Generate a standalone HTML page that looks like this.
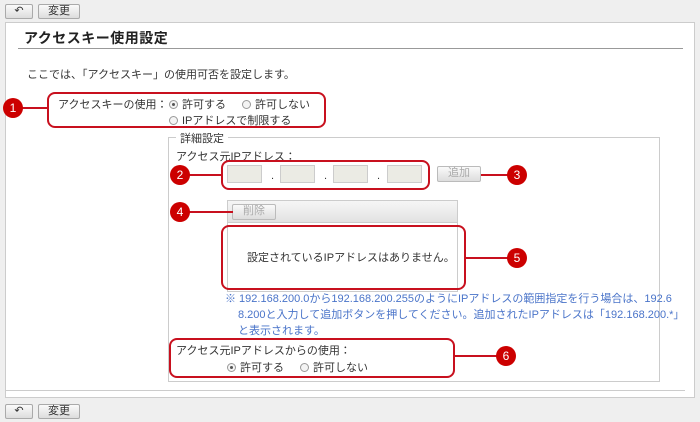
<!DOCTYPE html>
<html><head><meta charset="utf-8"><style>
*{margin:0;padding:0;box-sizing:border-box}
body{width:700px;height:422px;background:#efefef;font-family:"Liberation Sans","Noto Sans CJK JP",sans-serif;font-size:11px;color:#333;position:relative;overflow:hidden}
.a{position:absolute;white-space:nowrap}
.btn{position:absolute;height:15px;border:1px solid #aaa;border-radius:2px;background:linear-gradient(#fafafa,#ddd);font-size:11px;text-align:center;line-height:13px;color:#333}
.dis{color:#aaa;border-color:#bbb}
.red{position:absolute;border:2px solid #c8101e;border-radius:8px}
.c{position:absolute;width:20px;height:20px;border-radius:50%;background:#c00;color:#fff;font-size:12px;text-align:center;line-height:20px}
.ln{position:absolute;height:2px;background:#c8101e}
.rd{display:inline-block;width:9px;height:9px;border:1px solid #999;border-radius:50%;background:#f4f4f4;vertical-align:-1px;margin-right:4px;position:relative}
.rd.on::after{content:"";position:absolute;left:2px;top:2px;width:3px;height:3px;border-radius:50%;background:#555}
.in{position:absolute;top:165px;width:35px;height:18px;background:#ebebe4;border:1px solid #ccc}
.nt{position:absolute;color:#4a74c9;font-size:11px;white-space:nowrap}
</style></head><body>
<div class="btn" style="left:5px;top:4px;width:28px">&#x21B6;</div>
<div class="btn" style="left:38px;top:4px;width:42px">変更</div>
<div class="a" style="left:5px;top:22px;width:690px;height:376px;background:#fff;border:1px solid #ccc"></div>
<div class="a" style="left:24px;top:28px;font-size:14px;font-weight:bold;color:#222;letter-spacing:0.5px">アクセスキー使用設定</div>
<div class="a" style="left:18px;top:48px;width:665px;height:1px;background:#999"></div>
<div class="a" style="left:27px;top:66px">ここでは、「アクセスキー」の使用可否を設定します。</div>
<div class="red" style="left:47px;top:92px;width:279px;height:36px"></div>
<div class="ln" style="left:20px;top:107px;width:28px"></div>
<div class="c" style="left:3px;top:98px">1</div>
<div class="a" style="left:58px;top:96px">アクセスキーの使用：</div>
<div class="a" style="left:169px;top:96px"><span class="rd on"></span>許可する</div>
<div class="a" style="left:242px;top:96px"><span class="rd"></span>許可しない</div>
<div class="a" style="left:169px;top:112px"><span class="rd"></span>IPアドレスで制限する</div>
<div class="a" style="left:168px;top:137px;width:492px;height:245px;border:1px solid #ccc"></div>
<div class="a" style="left:176px;top:130px;background:#fff;padding:0 4px">詳細設定</div>
<div class="a" style="left:176px;top:148px">アクセス元IPアドレス：</div>
<div class="red" style="left:221px;top:160px;width:209px;height:30px"></div>
<div class="in" style="left:227px"></div><div class="a" style="left:271px;top:170px">.</div>
<div class="in" style="left:280px"></div><div class="a" style="left:324px;top:170px">.</div>
<div class="in" style="left:333px"></div><div class="a" style="left:377px;top:170px">.</div>
<div class="in" style="left:387px"></div>
<div class="btn dis" style="left:437px;top:166px;width:44px;height:16px">追加</div>
<div class="ln" style="left:481px;top:174px;width:28px"></div>
<div class="c" style="left:507px;top:165px">3</div>
<div class="ln" style="left:188px;top:174px;width:34px"></div>
<div class="c" style="left:170px;top:165px">2</div>
<div class="a" style="left:227px;top:200px;width:231px;height:92px;border:1px solid #ccc;background:#fff"></div>
<div class="a" style="left:228px;top:201px;width:229px;height:22px;background:linear-gradient(#f6f6f6,#e2e2e2);border-bottom:1px solid #ccc"></div>
<div class="btn dis" style="left:232px;top:204px;width:44px;height:16px">削除</div>
<div class="ln" style="left:188px;top:211px;width:45px"></div>
<div class="c" style="left:170px;top:202px">4</div>
<div class="red" style="left:221px;top:225px;width:245px;height:65px"></div>
<div class="a" style="left:247px;top:249px">設定されているIPアドレスはありません。</div>
<div class="ln" style="left:465px;top:257px;width:44px"></div>
<div class="c" style="left:507px;top:248px">5</div>
<div class="nt" style="left:225px;top:290px">※ 192.168.200.0から192.168.200.255のようにIPアドレスの範囲指定を行う場合は、192.6</div>
<div class="nt" style="left:238px;top:306px">8.200と入力して追加ボタンを押してください。追加されたIPアドレスは「192.168.200.*」</div>
<div class="nt" style="left:238px;top:322px">と表示されます。</div>
<div class="red" style="left:169px;top:338px;width:286px;height:40px"></div>
<div class="a" style="left:176px;top:342px">アクセス元IPアドレスからの使用：</div>
<div class="a" style="left:227px;top:359px"><span class="rd on"></span>許可する</div>
<div class="a" style="left:300px;top:359px"><span class="rd"></span>許可しない</div>
<div class="ln" style="left:454px;top:355px;width:45px"></div>
<div class="c" style="left:496px;top:346px">6</div>
<div class="a" style="left:5px;top:390px;width:680px;height:1px;background:#ccc"></div>
<div class="btn" style="left:5px;top:404px;width:28px">&#x21B6;</div>
<div class="btn" style="left:38px;top:404px;width:42px">変更</div>
</body></html>
